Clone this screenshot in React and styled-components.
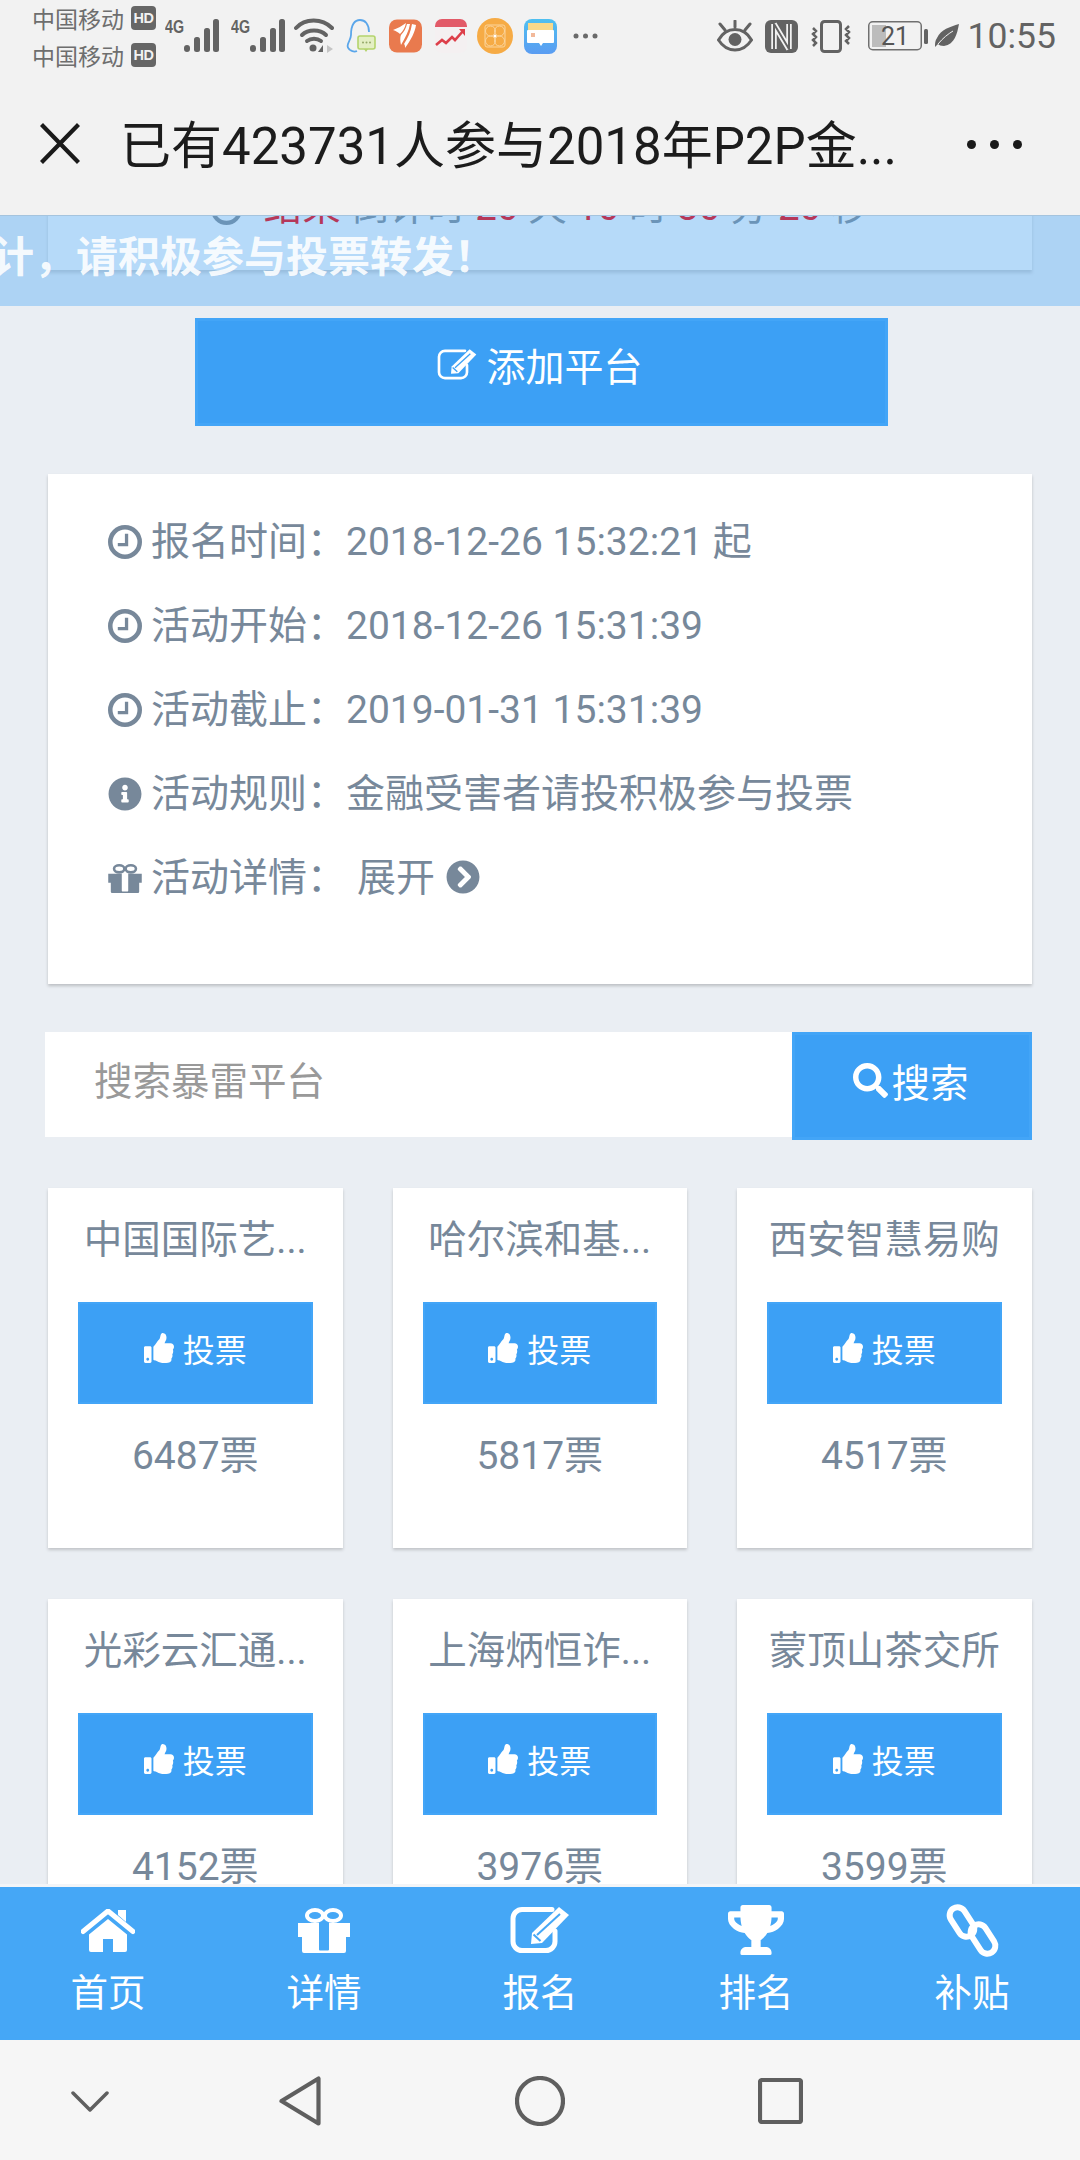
import React from "react";
import styled, { createGlobalStyle } from "styled-components";
import { FaThumbsUp, FaSearch, FaChevronCircleRight, FaInfoCircle, FaTrophy } from "react-icons/fa";

const Global = createGlobalStyle`
  html, body { margin: 0; padding: 0; background: #eaeef3; }
  * { box-sizing: border-box; }
  body { font-family: Roboto, "Noto Sans CJK SC", sans-serif; }
`;

const Screen = styled.div`
  width: 1080px; height: 2160px; display: flex; flex-direction: column; overflow: hidden; background: #eaeef3;
`;

/* status bar */
const StatusBar = styled.div`
  height: 72px; flex: none; background: #f2f2f2; display: flex; align-items: center; justify-content: space-between;
  padding: 0 24px 0 32px; color: #666;
`;
const StatusGroup = styled.div`display: flex; align-items: center;`;
const Carriers = styled.div`display: flex; flex-direction: column; width: 124px;`;
const Carrier = styled.div`
  height: 37px; display: flex; align-items: center; gap: 7px; font-size: 23px; color: #6e6e6e; white-space: nowrap;
`;
const HdBadge = styled.span`
  width: 25px; height: 24px; flex: none; border-radius: 4px; background: #666; color: #f2f2f2; font: 700 14.5px/24px "Liberation Sans", sans-serif;
  text-align: center; letter-spacing: -0.5px;
`;
const StatusSvg = styled.svg`
  display: block; flex: none; margin-left: ${p => p.$ml || 0}px;
`;
const Clock = styled.span`
  font-size: 35.5px; color: #636363; margin-left: 9px; line-height: 40px;
`;

/* nav bar */
const NavBar = styled.div`
  height: 144px; flex: none; background: #f2f2f2; display: flex; align-items: center; padding: 0 58px 0 40px;
  border-bottom: 1px solid #a5c4de; color: #1a1a1a;
`;
const NavTitle = styled.div`
  flex: 1; margin-left: 40px; font-size: 51px; line-height: 60px; padding-top: 6px; white-space: nowrap; color: #1c1c1c;
`;
const NavDots = styled.div`display: flex; gap: 14px; padding-top: 2px;`;
const NavDot = styled.i`width: 9px; height: 9px; border-radius: 50%; background: #1a1a1a; display: block;`;

/* scrolling content */
const Viewport = styled.div`
  flex: 1; position: relative; overflow: hidden; padding: 0 48px 0 47px; min-height: 0;
`;
const CountdownCard = styled.div`
  margin-top: -60px; height: 114px; background: #fff; box-shadow: 0 3px 3px rgba(0,0,0,.2);
  display: flex; justify-content: center; align-items: flex-start; gap: 22px; padding-top: 26px; margin-left: 1px;
  font-size: 38.5px; line-height: 50px; color: #6b94b8; white-space: nowrap;
`;
const CountdownIcon = styled.span`
  display: block; height: 31px; margin-top: 12px; position: relative; z-index: 1;
`;
const CountdownText = styled.span`position: relative; z-index: 1;`;
const Red = styled.span`color: #b5385a;`;
const Banner = styled.div`
  position: absolute; top: 0; left: 0; right: 0; height: 90px; background: rgba(124,189,245,.56); overflow: hidden;
`;
const BannerText = styled.div`
  position: absolute; left: -8px; top: 17px; font-size: 42px; line-height: 50px; font-weight: 700; color: rgba(255,255,255,.9); white-space: nowrap;
`;
const AddButton = styled.div`
  width: 693px; height: 108px; margin: 48px 0 0 148px; padding: 0 3px 16px 0; background: #3ca0f5; border: 3px solid #43a5f7;
  display: flex; align-items: center; justify-content: center; gap: 9px; color: #fff; font-size: 39px;
`;
const InfoCard = styled.div`
  margin: 48px 0 0 1px; height: 510px; background: #fff; box-shadow: 0 2px 3px rgba(0,0,0,.2); padding: 26px 0 0 60px;
`;
const InfoRow = styled.div`
  height: 84px; display: flex; align-items: center; gap: 9px; font-size: 39px; color: #77889a; white-space: nowrap;
`;
const InfoText = styled.span`padding-bottom: 8px;`;
const IconSlot = styled.span`width: 34px; display: flex; justify-content: center; align-items: center; flex: none;`;
const Expand = styled.span`display: inline-flex; align-items: center; gap: 11px; margin-left: 2px;`;
const ExpandIcon = styled.span`display: flex; margin-top: -2px;`;
const SearchRow = styled.div`
  margin: 48px 0 0 -2px; display: flex; height: 108px;
`;
const SearchInput = styled.div`
  width: 747px; height: 105px; background: #fff; padding-left: 49px; font-size: 38.5px; line-height: 99px; color: #999;
`;
const SearchButton = styled.div`
  width: 240px; padding: 0 2px 12px 0; background: #3ca0f5; border: 3px solid #43a5f7; color: #fff; font-size: 38.5px;
  display: flex; align-items: center; justify-content: center; gap: 3px;
`;
const Grid = styled.div`
  margin: 48px 0 0 1px; display: grid; grid-template-columns: repeat(3, 294.5px); column-gap: 50px; row-gap: 51px;
`;
const VoteCard = styled.div`
  height: 360px; background: #fff; box-shadow: 0 2px 3px rgba(0,0,0,.18); text-align: center;
`;
const VoteName = styled.div`
  height: 114px; padding-bottom: 10px; line-height: 104px; font-size: 38.5px; color: #77889a; white-space: nowrap;
`;
const VoteButton = styled.div`
  height: 102px; margin: 0 30px; padding-bottom: 10px; background: #3ca0f5; border: 2px solid #43a5f7; color: #fff; font-size: 32px;
  display: flex; align-items: center; justify-content: center; gap: 9px;
`;
const VoteCount = styled.div`
  line-height: 104px; font-size: 39px; color: #77889a;
`;

/* tab bar */
const TabBar = styled.div`
  height: 156px; flex: none; background: #45a7f6; border-top: 3px solid #f3f5f8; display: grid; grid-template-columns: repeat(5, 216px); position: relative;
`;
const Tab = styled.div`
  display: flex; flex-direction: column; align-items: center; padding-top: 15px; color: #fff;
`;
const TabIcon = styled.div`height: 56px; display: flex; align-items: center; justify-content: center;`;
const TabLabel = styled.div`margin-top: 10px; font-size: 37.5px; line-height: 50px;`;

/* system nav */
const SystemNav = styled.div`
  height: 120px; flex: none; background: #f6f6f6; display: grid; grid-template-columns: 180px 240px 240px 240px; align-items: center; justify-items: center;
  padding-top: 2px;
`;

const Ring = ({ size = 34 }) => (
  <svg width={size} height={size} viewBox="0 0 33 33" fill="none" stroke="currentColor" style={{ display: "block" }}>
    <circle cx="16.5" cy="16.5" r="14.3" strokeWidth="4.4" />
    <path d="M18 8.5V19H9.5" strokeWidth="3.2" />
  </svg>
);

const GiftIcon = ({ w = 52, h = 45 }) => (
  <svg width={w} height={h} viewBox="0 0 52 45">
    <ellipse cx="17" cy="7.5" rx="8" ry="5.5" fill="none" stroke="currentColor" strokeWidth="4" />
    <ellipse cx="35" cy="7.5" rx="8" ry="5.5" fill="none" stroke="currentColor" strokeWidth="4" />
    <path fillRule="evenodd" fill="currentColor" d="M0 15h52v14h-4v14a2 2 0 0 1-2 2H6a2 2 0 0 1-2-2V29H0zM21 15v26.500a1 1 0 0 0 1 1h8a1 1 0 0 0 1-1V15z" />
  </svg>
);

const HomeIcon = () => (
  <svg width="54" height="43" viewBox="0 0 54 43" fill="#fff">
    <path d="M37 1h8v12l-8-7z" />
    <path d="M2 22.500 27 2l25 20.500" fill="none" stroke="#fff" strokeWidth="5" strokeLinecap="round" strokeLinejoin="round" />
    <path d="M27 10 46 25.500V41a2 2 0 0 1-2 2H32V30H22v13H10a2 2 0 0 1-2-2V25.500z" />
  </svg>
);

const EditIcon = ({ w = 60, h = 48, sw = 5, cut = "#45a7f6" }) => (
  <svg width={w} height={h} viewBox="0 0 60 48">
    <path d="M42 3.500H12a9 9 0 0 0-9 9v23a9 9 0 0 0 9 9h24a9 9 0 0 0 9-9V25" fill="none" stroke="#fff" strokeWidth={sw} strokeLinecap="round" />
    <path d="M21 38l1-11L49 1l10 8-27 28z" fill="#fff" />
    <path d="M27 29 50 8" stroke={cut} strokeWidth="2" />
    <path d="M23.500 28.500l7 6.500" stroke={cut} strokeWidth="2" />
  </svg>
);

const LinkIcon = () => (
  <svg width="57" height="55" viewBox="0 0 57 55" fill="none" stroke="#fff" strokeWidth="6">
    <rect x="10" y="3" width="16" height="32" rx="8" transform="rotate(-33 18 19)" />
    <rect x="31" y="20" width="16" height="32" rx="8" transform="rotate(-33 39 36)" />
  </svg>
);

const Signal = ({ ml }) => (
  <StatusSvg $ml={ml} width="55" height="36" viewBox="0 0 55 36" fill="#636363">
    <text x="0" y="15" fontFamily="Liberation Sans Narrow, Liberation Sans, sans-serif" fontWeight="700" fontSize="19" textLength="19" lengthAdjust="spacingAndGlyphs">4G</text>
    <rect x="19" y="27" width="6" height="7" rx="3" />
    <rect x="29" y="19" width="6" height="15" rx="2.500" />
    <rect x="39" y="10" width="6" height="24" rx="2.500" />
    <rect x="48" y="1" width="6" height="33" rx="2.500" />
  </StatusSvg>
);

const Wifi = () => (
  <StatusSvg $ml={8} width="40" height="36" viewBox="0 0 40 36" fill="none" stroke="#636363" strokeWidth="4" strokeLinecap="round">
    <path d="M2 10C11 0 28 0 38 10" />
    <path d="M8 17c6-6 18-6 24 0" />
    <path d="M13 23c4-3 10-3 14 0" />
    <circle cx="19" cy="30" r="3.500" fill="#636363" stroke="none" />
    <path d="M29 27v7h-5z" fill="#636363" stroke="none" />
    <path d="M33 27l6 4-6 4z" fill="#c5c5c5" stroke="none" />
  </StatusSvg>
);

const QQ = () => (
  <StatusSvg $ml={12} width="30" height="36" viewBox="0 0 30 36" fill="none">
    <path d="M4 32c-2-2-3-3-2-6s3-6 3-9C5 6 9 2 14 2s9 4 9 12" stroke="#5aa6ea" strokeWidth="1.800" />
    <path d="M4 32c3 2 5 2 7 1" stroke="#5aa6ea" strokeWidth="1.800" />
    <rect x="12" y="18" width="17" height="13" rx="2" fill="#e4efc4" stroke="#b4d46c" strokeWidth="1.600" />
    <path d="M18 31l2 3 2-3z" fill="#b4d46c" />
    <circle cx="17" cy="24.500" r="1" fill="#94a868" /><circle cx="20.500" cy="24.500" r="1" fill="#94a868" /><circle cx="24" cy="24.500" r="1" fill="#94a868" />
  </StatusSvg>
);

const AppFeather = () => (
  <StatusSvg $ml={13} width="33" height="36" viewBox="0 0 33 36">
    <rect y="1.500" width="33" height="33" rx="8" fill="#e97a4e" />
    <path d="M4 12c5-2 9-4 13-7-1 5-3 8-6 11-2-2-4-3-7-4z" fill="#fff" />
    <path d="M18 6c1 0 2 0 3 0-1 7-5 14-9 21-1-4-1-8 0-10 3-3 5-7 6-11z" fill="#fff" />
    <path d="M23 6c1 0 3 1 4 1-1 7-5 15-11 23 0-2 0-3-1-4 4-6 7-13 8-20z" fill="#fff" />
  </StatusSvg>
);

const AppChart = () => (
  <StatusSvg $ml={13} width="32" height="36" viewBox="0 0 32 36">
    <rect y="1" width="32" height="34" rx="7" fill="#f4f0f1" />
    <path d="M0 8a7 7 0 0 1 7-7h18a7 7 0 0 1 7 7v1H0z" fill="#e25a68" />
    <path d="M1 27l6-5 4 3 6-6 3 3 8-9" fill="none" stroke="#dd3f4a" strokeWidth="2.600" />
    <path d="M24 11h6v7z" fill="#dd3f4a" />
  </StatusSvg>
);

const AppCoin = () => (
  <StatusSvg $ml={10} width="36" height="36" viewBox="0 0 36 36">
    <circle cx="18" cy="18" r="18" fill="#f6ab45" />
    <rect x="8" y="7" width="20" height="22" rx="2" fill="none" stroke="#fbd49c" strokeWidth="1" />
    <circle cx="13.500" cy="13" r="5" fill="none" stroke="#fbd49c" /><circle cx="22.500" cy="13" r="5" fill="none" stroke="#fbd49c" />
    <circle cx="13.500" cy="23" r="5" fill="none" stroke="#fbd49c" /><circle cx="22.500" cy="23" r="5" fill="none" stroke="#fbd49c" />
    <circle cx="18" cy="18" r="1.500" fill="#fff" />
  </StatusSvg>
);

const AppWallet = () => (
  <StatusSvg $ml={11} width="33" height="36" viewBox="0 0 33 36">
    <defs><linearGradient id="wal" x1="0" x2="0" y1="0" y2="1"><stop offset="0" stopColor="#4fc0f0" /><stop offset="1" stopColor="#5a9cf2" /></linearGradient></defs>
    <rect y="1" width="33" height="35" rx="8" fill="url(#wal)" />
    <rect x="4" y="5" width="25" height="7" fill="#f8d98a" />
    <rect x="3" y="12" width="27" height="13" rx="1" fill="#fff" />
    <rect x="7" y="15" width="4" height="4" fill="#f2b99a" />
    <path d="M15 25h4l-2 3z" fill="#fff" />
  </StatusSvg>
);

const MoreDots = () => (
  <StatusSvg $ml={16} width="25" height="8" viewBox="0 0 25 8" fill="#6a6a6a">
    <circle cx="3" cy="4" r="2.500" /><circle cx="12.500" cy="4" r="2.500" /><circle cx="22" cy="4" r="2.500" />
  </StatusSvg>
);

const Eye = () => (
  <StatusSvg width="36" height="32" viewBox="0 0 36 32" fill="none" stroke="#636363" strokeWidth="3">
    <path d="M1.500 20C6 12 12 9.500 18 9.500S30 12 34.500 20C30 27 24 30 18 30S6 27 1.500 20z" />
    <circle cx="18" cy="19.500" r="6.500" fill="#636363" stroke="none" />
    <path d="M18 1v6M3 4l5 6M33 4l-5 6" strokeLinecap="round" />
  </StatusSvg>
);

const Nfc = () => (
  <StatusSvg $ml={12} width="33" height="33" viewBox="0 0 33 33" fill="none">
    <rect width="33" height="33" rx="6" fill="#636363" />
    <path d="M9 4v25M9 4l15 25M24 29V4" stroke="#f2f2f2" strokeWidth="5.500" />
    <path d="M9 4v25M9 4l15 25M24 29V4" stroke="#636363" strokeWidth="2" />
  </StatusSvg>
);

const Vibrate = () => (
  <StatusSvg $ml={12} width="42" height="33" viewBox="0 0 42 33" fill="none" stroke="#636363" strokeWidth="3">
    <rect x="11.500" y="1.500" width="19" height="30" rx="3" />
    <path d="M3 8l3 3-3 3 3 3-3 3 3 3-3 3M39 6l-3 3 3 3-3 3 3 3-3 3 3 3" strokeWidth="2.500" />
  </StatusSvg>
);

const Battery = () => (
  <StatusSvg $ml={16} width="60" height="30" viewBox="0 0 60 30">
    <rect x=".75" y=".75" width="52.500" height="28" rx="4" fill="none" stroke="#707070" strokeWidth="1.500" />
    <rect x="4" y="4" width="14" height="22" fill="#bcbcbc" />
    <rect x="56" y="8" width="4" height="15" rx="1.500" fill="#636363" />
    <text x="27" y="24" textAnchor="middle" fontFamily="Roboto, sans-serif" fontSize="25" fill="#555">21</text>
  </StatusSvg>
);

const Leaf = () => (
  <StatusSvg $ml={7} width="24" height="24" viewBox="0 0 24 24">
    <path d="M24 0C22 10 20 20 9 22c-3 0-5-1-6-2l-3 3c0-4 0-6 2-9C6 5 15 3 24 0z" fill="#636363" />
    <path d="M3 20C8 14 13 10 18 7" stroke="#f2f2f2" strokeWidth="1" fill="none" />
  </StatusSvg>
);

const infoRows = [
  { icon: <Ring />, text: "报名时间：2018-12-26 15:32:21 起" },
  { icon: <Ring />, text: "活动开始：2018-12-26 15:31:39" },
  { icon: <Ring />, text: "活动截止：2019-01-31 15:31:39" },
  { icon: <FaInfoCircle size={34} />, text: "活动规则：金融受害者请投积极参与投票" },
];

const votes = [
  ["中国国际艺...", 6487],
  ["哈尔滨和基...", 5817],
  ["西安智慧易购", 4517],
  ["光彩云汇通...", 4152],
  ["上海炳恒诈...", 3976],
  ["蒙顶山茶交所", 3599],
];

const tabs = [
  { label: "首页", icon: <HomeIcon /> },
  { label: "详情", icon: <GiftIcon /> },
  { label: "报名", icon: <EditIcon /> },
  { label: "排名", icon: <FaTrophy size={56} /> },
  { label: "补贴", icon: <LinkIcon /> },
];

export default function App() {
  return (
    <Screen>
      <Global />
      <StatusBar>
        <StatusGroup>
          <Carriers>
            <Carrier>中国移动<HdBadge>HD</HdBadge></Carrier>
            <Carrier>中国移动<HdBadge>HD</HdBadge></Carrier>
          </Carriers>
          <Signal ml={9} />
          <Signal ml={11} />
          <Wifi />
          <QQ />
          <AppFeather />
          <AppChart />
          <AppCoin />
          <AppWallet />
          <MoreDots />
        </StatusGroup>
        <StatusGroup>
          <Eye />
          <Nfc />
          <Vibrate />
          <Battery />
          <Leaf />
          <Clock>10:55</Clock>
        </StatusGroup>
      </StatusBar>

      <NavBar>
        <svg width="40" height="41" viewBox="0 0 40 41" stroke="#1a1a1a" strokeWidth="4.200" fill="none">
          <path d="M1.500 1.500 38.500 39.500M38.500 1.500 1.500 39.500" />
        </svg>
        <NavTitle>已有423731人参与2018年P2P金...</NavTitle>
        <NavDots><NavDot /><NavDot /><NavDot /></NavDots>
      </NavBar>

      <Viewport>
        <CountdownCard>
          <CountdownIcon><Ring size={31} /></CountdownIcon>
          <CountdownText><Red>结束</Red> 倒计时 <Red>20</Red> 天 <Red>10</Red> 时 <Red>30</Red> 分 <Red>20</Red> 秒</CountdownText>
        </CountdownCard>
        <AddButton><EditIcon w={40} h={33} sw={4} cut="#3ca0f5" />添加平台</AddButton>
        <InfoCard>
          {infoRows.map(r => (
            <InfoRow key={r.text}><IconSlot>{r.icon}</IconSlot><InfoText>{r.text}</InfoText></InfoRow>
          ))}
          <InfoRow>
            <IconSlot><GiftIcon w={34} h={29} /></IconSlot>
            <InfoText>活动详情：</InfoText>
            <Expand><InfoText>展开</InfoText><ExpandIcon><FaChevronCircleRight size={34} /></ExpandIcon></Expand>
          </InfoRow>
        </InfoCard>
        <SearchRow>
          <SearchInput>搜索暴雷平台</SearchInput>
          <SearchButton><FaSearch size={35} />搜索</SearchButton>
        </SearchRow>
        <Grid>
          {votes.map(([name, n]) => (
            <VoteCard key={name}>
              <VoteName>{name}</VoteName>
              <VoteButton><FaThumbsUp size={30} />投票</VoteButton>
              <VoteCount>{n}票</VoteCount>
            </VoteCard>
          ))}
        </Grid>
        <Banner><BannerText>计，请积极参与投票转发！</BannerText></Banner>
      </Viewport>

      <TabBar>
        {tabs.map(t => (
          <Tab key={t.label}>
            <TabIcon>{t.icon}</TabIcon>
            <TabLabel>{t.label}</TabLabel>
          </Tab>
        ))}
      </TabBar>

      <SystemNav>
        <svg width="38" height="21" viewBox="0 0 38 21" fill="none" stroke="#5f5f5f" strokeWidth="3.500" strokeLinecap="round" strokeLinejoin="round">
          <path d="M2 2 19 19 36 2" />
        </svg>
        <svg width="42" height="50" viewBox="0 0 42 50" fill="none" stroke="#5f5f5f" strokeWidth="4.200" strokeLinejoin="round">
          <path d="M39.500 2.500v45L2.500 25z" />
        </svg>
        <svg width="50" height="50" viewBox="0 0 50 50" fill="none" stroke="#5f5f5f" strokeWidth="4.200">
          <circle cx="25" cy="25" r="23" />
        </svg>
        <svg width="45" height="46" viewBox="0 0 45 46" fill="none" stroke="#5f5f5f" strokeWidth="4.200">
          <rect x="2" y="2" width="41" height="42" rx="2" />
        </svg>
      </SystemNav>
    </Screen>
  );
}
